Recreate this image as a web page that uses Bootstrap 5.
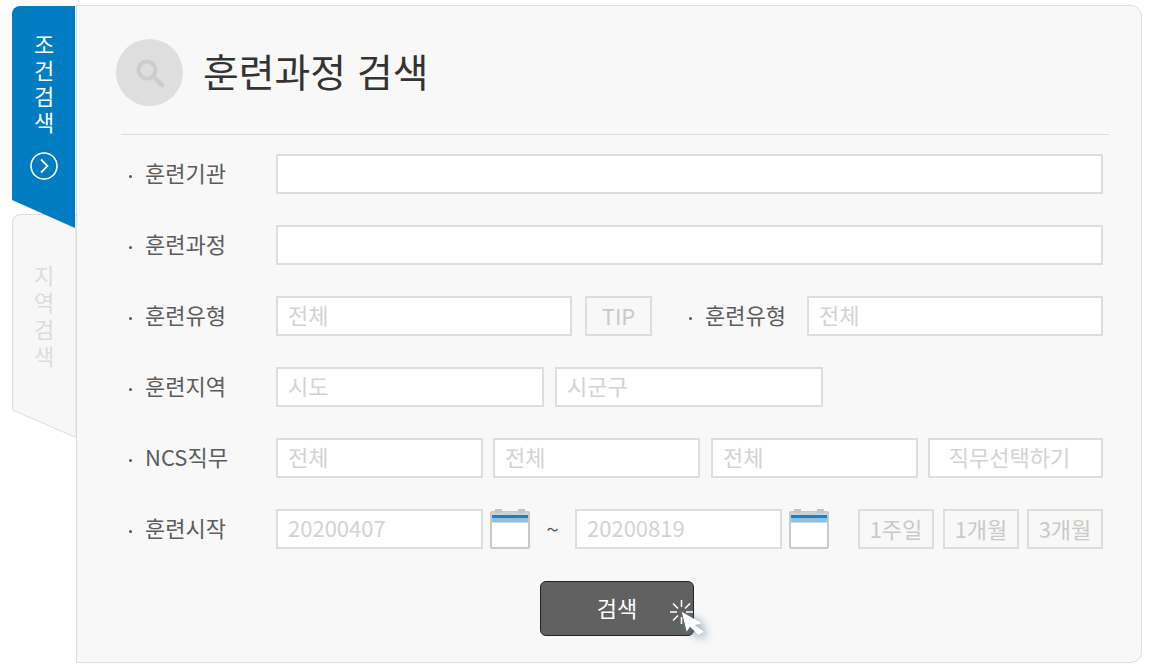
<!DOCTYPE html>
<html lang="ko">
<head>
<meta charset="utf-8">
<title>훈련과정 검색</title>
<link rel="stylesheet" href="https://cdn.jsdelivr.net/npm/bootstrap@5.3.0/dist/css/bootstrap.min.css">
<style>
html,body{height:100%;overflow:hidden}
body{background:#fff;font-family:"Noto Sans CJK KR","Noto Sans",sans-serif;color:#555}
.stage{padding:5px 0 0 12px;width:1142px}
.rail{width:64px;flex:none;position:relative;z-index:1}
.tab-on{height:222px;width:63px;margin-top:1px;background:#007cc3;color:#fff;border-top-left-radius:8px;clip-path:polygon(0 0,100% 0,100% 100%,0 87.4%);padding-top:28px;position:relative;z-index:2}
.tab-off{height:224px;margin-top:-14px;position:relative;color:#dcdcdc}
.tab-off svg{position:absolute;left:0;top:0}
.tab-off .vtext{position:relative;padding-top:51px;letter-spacing:5px}
.vtext{font-size:22px;line-height:64px;width:64px;height:118px;box-sizing:content-box;writing-mode:vertical-rl;text-orientation:upright;letter-spacing:4px}
.arrow{display:block;margin:0 auto 0 18px}
.panel{width:1066px;height:658px;background:#f8f8f8;border:1px solid #ddd;border-radius:0 11px 11px 0;padding:0 32px 0 44px}
.head{height:129px;border-bottom:1px solid #ddd;padding:33px 0 0 0}
.badge-ico{width:67px;height:67px;border-radius:50%;background:#dedede;margin-left:-5px;margin-right:20px;flex:none}
.title{font-size:38.900px;font-weight:400;color:#333;margin:0;line-height:62px}
.rows{padding-top:19px;display:flex;flex-direction:column;gap:31px}
.frow{height:40px}
.lbl{font-size:22px;color:#5c5c5c;line-height:36px;white-space:nowrap;flex:none}
.lbl::before{content:"";display:inline-block;width:3px;height:3px;border-radius:50%;background:#555;vertical-align:middle;margin:0 13px 0 9px}
.l1{width:156px;margin-left:-1px}
.l2{width:127px;margin-left:28px}
.fld.form-control{height:40px;border:2px solid #ddd;border-radius:0;background:#fff;font-size:22px;padding:0 10px 4px;color:#555;box-shadow:none;flex:none;line-height:32px}
.fld.form-control::placeholder{color:#d3d3d3;opacity:1}
.fld.pick.form-control{padding-right:22px}
.fbtn{height:40px;border:2px solid #ddd;background:#f8f8f8;color:#c9c9c9;font-size:22px;line-height:34px;text-align:center;flex:none;padding:0 0 2px;border-radius:0}
.fbtn:hover{border-color:#ddd;color:#c9c9c9;background:#f8f8f8}
.w827{width:827px}.w296{width:296px}.w268{width:268px}.w207{width:207px}.w175{width:175px}.w67{width:67px}.w76{width:76px}
.ml13{margin-left:13px}.ml11{margin-left:11px}.ml10{margin-left:10px}.ml8{margin-left:8px}.ml9{margin-left:9px}.ml29{margin-left:29px}
.tilde{width:45px;text-align:center;font-size:22px;color:#555;flex:none;line-height:38px}
.cal{flex:none;margin-left:7px}
.gobtn-wrap{margin-top:32px;padding-left:419px;position:relative}
.gobtn.btn{position:relative;width:154px;height:55px;background:#616161;border:1px solid #222;border-radius:6px;color:#fff;font-size:22px;padding:0 0 2px}
.gobtn.btn:hover{background:#616161;color:#fff;border-color:#222}
.cursor{position:absolute;left:129px;top:18px;overflow:visible}
</style>
</head>
<body>
<svg width="0" height="0" class="d-block position-absolute"><defs><filter id="soft"><feGaussianBlur stdDeviation=".45"/></filter><filter id="sh" x="-80%" y="-80%" width="260%" height="260%"><feGaussianBlur stdDeviation="5"/></filter></defs></svg>
<div class="stage d-flex align-items-start">
  <div class="rail">
    <div class="tab-on">
      <div class="vtext">조건검색</div>
      <svg class="arrow" width="28" height="28" viewBox="0 0 28 28" fill="none" stroke="#fff"><circle cx="14" cy="14" r="13" stroke-width="1.6"/><path d="M11 7.500l6.500 6.500-6.500 6.500" stroke-width="1.8"/></svg>
    </div>
    <div class="tab-off">
      <svg width="64" height="224" viewBox="0 0 64 224"><path d="M.5 196V8A7.500 7.500 0 0 1 8 .5H64V223.500L.5 196Z" fill="#f7f7f7" stroke="#ddd"/></svg>
      <div class="vtext">지역검색</div>
    </div>
  </div>
  <div class="panel">
    <div class="head d-flex align-items-start">
      <div class="badge-ico d-flex align-items-center justify-content-center">
        <svg width="32" height="32" viewBox="0 0 32 32" fill="none" stroke="#cdcdcd"><circle cx="13" cy="13" r="8.500" stroke-width="4"/><path d="M19.500 19.500L28 28" stroke-width="4.500" stroke-linecap="round"/></svg>
      </div>
      <h1 class="title">훈련과정 검색</h1>
    </div>
    <form class="rows" onsubmit="return false">
      <div class="frow d-flex"><div class="lbl l1">훈련기관</div><input class="form-control fld w827" type="text"></div>
      <div class="frow d-flex"><div class="lbl l1">훈련과정</div><input class="form-control fld w827" type="text"></div>
      <div class="frow d-flex"><div class="lbl l1">훈련유형</div><input class="form-control fld w296" placeholder="전체"><button type="button" class="btn fbtn w67 ml13">TIP</button><div class="lbl l2">훈련유형</div><input class="form-control fld w296" placeholder="전체"></div>
      <div class="frow d-flex"><div class="lbl l1">훈련지역</div><input class="form-control fld w268" placeholder="시도"><input class="form-control fld w268 ml11" placeholder="시군구"></div>
      <div class="frow d-flex"><div class="lbl l1">NCS직무</div><input class="form-control fld w207" placeholder="전체"><input class="form-control fld w207 ml10" placeholder="전체"><input class="form-control fld w207 ml11" placeholder="전체"><input class="form-control fld pick w175 ml10 text-center" placeholder="직무선택하기"></div>
      <div class="frow d-flex"><div class="lbl l1">훈련시작</div><input class="form-control fld w207" placeholder="20200407">
        <svg class="cal" width="40" height="40" viewBox="0 0 40 40"><g filter="url(#soft)"><rect x="1" y="3" width="38" height="36" rx="1" fill="#fff" stroke="#c8c8c8" stroke-width="2"/><rect x="2" y="3" width="36" height="3" fill="#c9d3da"/><rect x="2" y="6" width="36" height="3.500" fill="#1f80c4"/><rect x="2" y="9.500" width="36" height="4" fill="#8fc0e0"/><rect x="5" y="0" width="7" height="4" fill="#c4c4c4"/><rect x="28" y="0" width="7" height="4" fill="#c4c4c4"/></g></svg>
        <div class="tilde">~</div><input class="form-control fld w207" placeholder="20200819">
        <svg class="cal" width="40" height="40" viewBox="0 0 40 40"><g filter="url(#soft)"><rect x="1" y="3" width="38" height="36" rx="1" fill="#fff" stroke="#c8c8c8" stroke-width="2"/><rect x="2" y="3" width="36" height="3" fill="#c9d3da"/><rect x="2" y="6" width="36" height="3.500" fill="#1f80c4"/><rect x="2" y="9.500" width="36" height="4" fill="#8fc0e0"/><rect x="5" y="0" width="7" height="4" fill="#c4c4c4"/><rect x="28" y="0" width="7" height="4" fill="#c4c4c4"/></g></svg>
        <button type="button" class="btn fbtn w76 ml29">1주일</button><button type="button" class="btn fbtn w76 ml9">1개월</button><button type="button" class="btn fbtn w76 ml8">3개월</button></div>
    </form>
    <div class="gobtn-wrap">
      <button type="button" class="btn gobtn">검색
        <svg class="cursor" width="40" height="42" viewBox="0 0 40 42"><path d="M12 12L32 23 26 25 35 32 29 36 20 27 17 32Z" fill="#4f7391" opacity=".75" filter="url(#sh)" transform="translate(2 2)"/><path d="M11.500 0v7M11.500 17v7M0 12h7M16 12h7M3 3.500l5 5M3 20.500l5-5M20 3.500l-5 5" stroke="#fff" stroke-width="1.500" fill="none"/><path d="M11.700 11.700L31.700 23.300 25 25 34 31.700 28.300 35 20 26.700 16.700 31.700Z" fill="#fff"/></svg>
      </button>
    </div>
  </div>
</div>
</body>
</html>
